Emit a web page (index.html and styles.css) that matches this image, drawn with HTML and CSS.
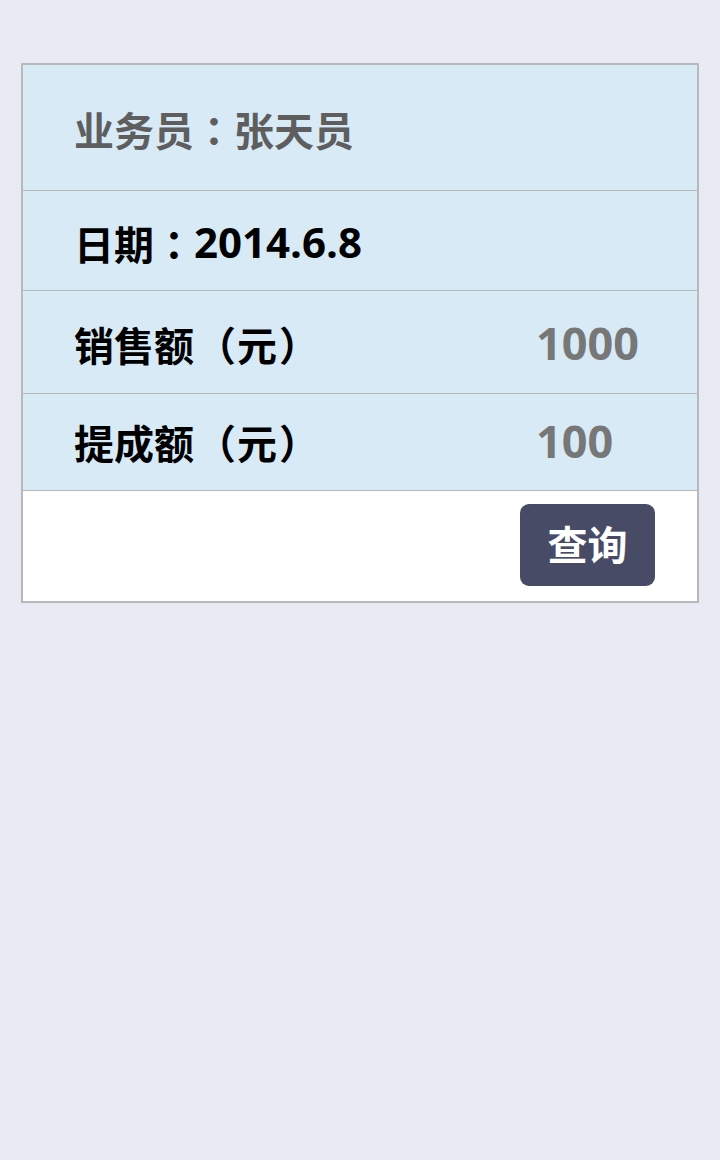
FILE: index.html
```html
<!DOCTYPE html>
<html lang="zh-CN">
<head>
<meta charset="utf-8">
<title>提成查询</title>
<link rel="stylesheet" href="styles.css">
</head>
<body>
<div class="card">
  <div class="row row-name"><span class="label muted">业务员<span class="punct">：</span>张天员</span></div>
  <div class="row row-date"><span class="label">日期<span class="punct">：</span><span class="num">2014.6.8</span></span></div>
  <div class="row row-sales"><span class="label">销售额<span class="paren-open">（</span>元<span class="paren-close">）</span></span><span class="value">1000</span></div>
  <div class="row row-comm"><span class="label">提成额<span class="paren-open">（</span>元<span class="paren-close">）</span></span><span class="value">100</span></div>
  <div class="footer"><button class="btn" type="button">查询</button></div>
</div>
</body>
</html>
```

FILE: styles.css
```css
html, body {
  margin: 0;
  padding: 0;
  background: #e8ebf4;
}
body {
  font-family: "Noto Sans CJK SC", "Noto Sans", sans-serif;
  font-weight: 700;
  padding-top: 63px;
}
.card {
  margin-left: 21px;
  width: 674px;
  border: 2px solid #b8b8b8;
  background: #ffffff;
}
.row {
  display: flex;
  align-items: center;
  box-sizing: border-box;
  background: #d7eaf6;
  border-bottom: 1px solid #b8b8b8;
  padding-left: 51px;
  font-size: 40px;
  line-height: 1;
  color: #000000;
}
.row-name { height: 126px; padding-top: 2px; }
.row-date { height: 100px; padding-top: 4px; }
.row-sales { height: 103px; padding-top: 4px; }
.row-comm { height: 97px; }
.label { white-space: nowrap; display: flex; align-items: center; }
.punct { font-family: "Noto Sans CJK TC", "Noto Sans CJK SC", sans-serif; }
.paren-open { margin-left: 2px; margin-right: 1px; }
.paren-close { margin-left: 2px; }
.muted { color: #5e5e5e; }
.num {
  font-family: "Open Sans", "Noto Sans", sans-serif;
  font-size: 42px;
  margin-top: -2px;
}
.value {
  margin-left: auto;
  width: 161px;
  color: #777777;
  font-family: "Open Sans", "Noto Sans", sans-serif;
  font-size: 45px;
  margin-top: -3px;
}
.footer {
  height: 110px;
  display: flex;
  align-items: center;
  justify-content: flex-end;
  padding-right: 42px;
}
.btn {
  width: 135px;
  height: 82px;
  border: none;
  border-radius: 9px;
  background: #474b66;
  color: #ffffff;
  font-family: "Noto Sans CJK SC", "Noto Sans", sans-serif;
  font-weight: 700;
  font-size: 40px;
  line-height: 1;
  padding: 0 0 4px;
  margin-top: -2px;
}
```
